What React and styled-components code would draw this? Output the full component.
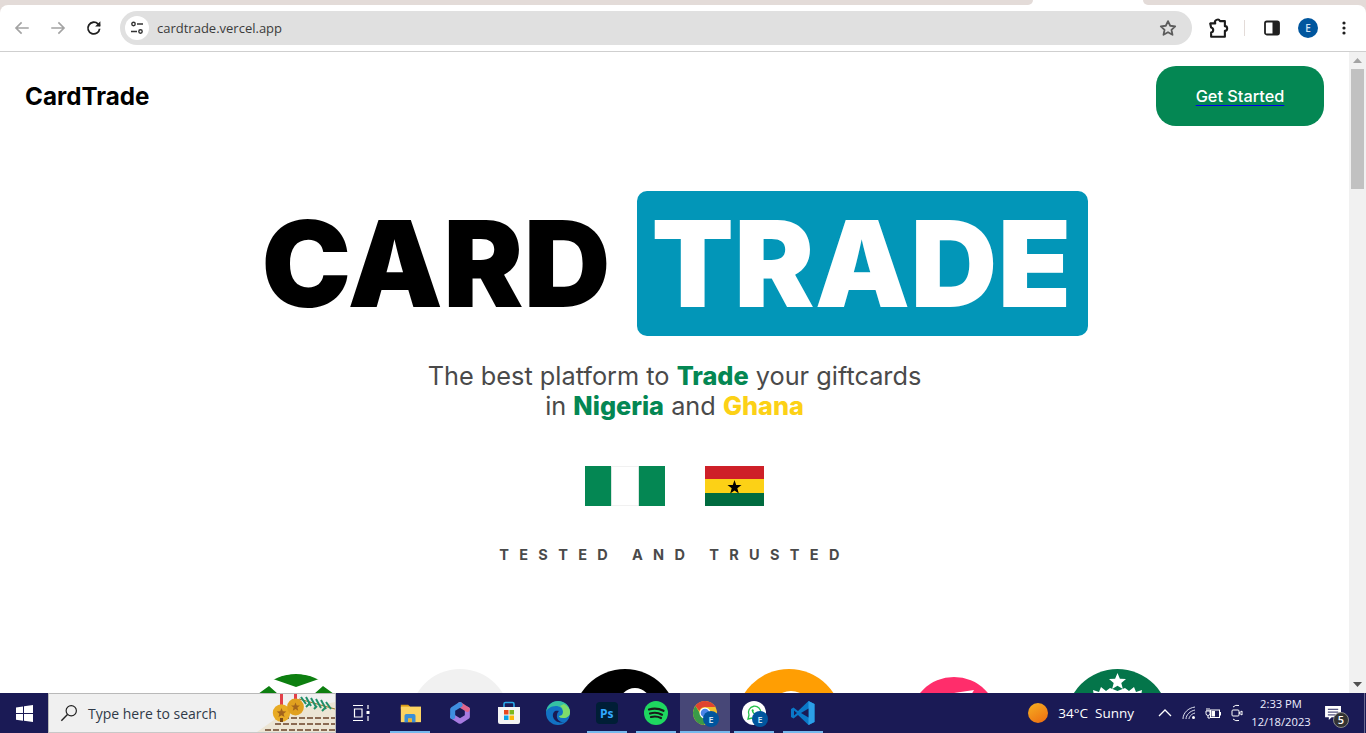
import styled, { createGlobalStyle } from 'styled-components';

const GlobalStyle = createGlobalStyle`
  html, body { margin: 0; padding: 0; height: 733px; overflow: hidden; background: #fff; }
  * { box-sizing: border-box; }
`;

const Screen = styled.div`
  width: 1366px;
  height: 733px;
  display: flex;
  flex-direction: column;
  overflow: hidden;
  font-family: Inter, "Liberation Sans", sans-serif;
`;

/* browser frame */
const TabStrip = styled.div`
  height: 5px;
  display: flex;
  background: #fff;
`;
const TabRest = styled.div`
  flex: ${(p) => (p.$side === 'left' ? '0 0 1033px' : '1')};
  background: #e3dbd8;
  border-radius: ${(p) => (p.$side === 'left' ? '0 0 7px 0' : '0 0 0 7px')};
`;
const TabGap = styled.div`
  width: 110px;
`;
const ToolbarBack = styled.div`
  background: linear-gradient(#e3dbd8 8px, #fff 8px);
`;
const Toolbar = styled.div`
  height: 47px;
  display: flex;
  align-items: center;
  background: #fff;
  border-radius: 8px 8px 0 0;
  border-bottom: 1px solid #cfcfcf;
  padding: 0 3px 1px 4px;
`;
const NavButton = styled.div`
  width: 36px;
  height: 34px;
  display: flex;
  align-items: center;
  justify-content: center;
  flex: none;
`;
const Omnibox = styled.div`
  flex: 1;
  height: 34px;
  margin: 0 8px 0 8px;
  border-radius: 17px;
  background: #e0e0e0;
  display: flex;
  align-items: center;
  padding: 0 15px 0 5px;
`;
const TuneChip = styled.div`
  width: 24px;
  height: 24px;
  border-radius: 50%;
  background: #fff;
  display: flex;
  align-items: center;
  justify-content: center;
`;
const Url = styled.div`
  flex: 1;
  margin-left: 8px;
  font: 400 13px "Open Sans", sans-serif;
  color: #3b3b3b;
`;
const ToolGroup = styled.div`
  display: flex;
  align-items: center;
  width: 163px;
  flex: none;
`;
const ToolSep = styled.div`
  width: 1px;
  height: 16px;
  background: #e3dbd8;
  margin: 0 9px 0 8px;
`;
const Avatar = styled.div`
  width: ${(p) => p.$size}px;
  height: ${(p) => p.$size}px;
  border-radius: 50%;
  background: #00569e;
  color: #cfe3f5;
  display: flex;
  align-items: center;
  justify-content: center;
  font: 600 ${(p) => p.$font}px "Open Sans", sans-serif;
  flex: none;
`;
const AvatarBadge = styled(Avatar)`
  position: absolute;
  right: -2px;
  bottom: -2px;
`;

/* page inside the browser */
const Viewport = styled.div`
  flex: 1;
  min-height: 0;
  display: flex;
`;
const Page = styled.div`
  flex: 1;
  min-width: 0;
  overflow: hidden;
  background: #fff;
`;
const Header = styled.header`
  display: flex;
  align-items: center;
  justify-content: space-between;
  padding: 14px 25px 0;
`;
const Logo = styled.div`
  font-size: 24.2px;
  font-weight: 700;
  color: #000;
`;
const GetStarted = styled.a`
  width: 168px;
  height: 60px;
  border-radius: 20px;
  background: #048753;
  color: #fff;
  display: flex;
  align-items: center;
  justify-content: center;
  font-size: 16.3px;
  font-weight: 500;
  text-decoration: underline;
  text-decoration-color: #0000ee;
  text-decoration-thickness: 1px;
  text-underline-offset: 3px;
`;
const Title = styled.h1`
  margin: 65px 0 0;
  display: flex;
  justify-content: center;
  align-items: center;
  gap: 26.5px;
  font-size: 120px;
  font-weight: 900;
  line-height: 145px;
  letter-spacing: 0.4px;
  color: #000;
`;
const TitleBox = styled.span`
  background: #0296b8;
  color: #fff;
  border-radius: 10px;
  padding: 0 16px 0 14px;
`;
const Subtitle = styled.p`
  margin: 25px 0 0;
  text-align: center;
  font-size: 25.3px;
  line-height: 30px;
  color: #4a4a4a;
`;
const Mark = styled.b`
  font-weight: 800;
  color: ${(p) => p.$color};
`;
const Flags = styled.div`
  margin-top: 45px;
  display: flex;
  justify-content: center;
  gap: 40px;
`;
const Tested = styled.div`
  margin-top: 39px;
  text-align: center;
  font-size: 14.5px;
  font-weight: 700;
  line-height: 20px;
  letter-spacing: 10.35px;
  color: #4a4a4a;
`;
const Brands = styled.div`
  margin-top: 104px;
  display: flex;
  gap: 64.4px;
  padding-left: 246px;
`;
const BrandSlot = styled.div`
  width: 100px;
  height: 100px;
  flex: none;
  display: flex;
  justify-content: center;
  align-items: flex-start;
`;

const Scrollbar = styled.div`
  width: 17px;
  flex: none;
  background: #f1f1f1;
  display: flex;
  flex-direction: column;
  align-items: center;
`;
const ScrollArrow = styled.div`
  height: 17px;
  width: 17px;
  display: flex;
  align-items: center;
  justify-content: center;
  margin-top: ${(p) => (p.$down ? 'auto' : '0')};
`;
const ScrollThumb = styled.div`
  width: 13px;
  height: 120px;
  background: #c1c1c1;
`;

/* windows taskbar */
const Taskbar = styled.div`
  height: 40px;
  flex: none;
  background: #1a1a55;
  display: flex;
  align-items: stretch;
  color: #fff;
  font-family: "Open Sans", sans-serif;
`;
const StartButton = styled.div`
  width: 48px;
  display: flex;
  align-items: center;
  justify-content: center;
`;
const SearchBox = styled.div`
  width: 288px;
  background: #f0f0f0;
  border: 1px solid #b9b9b9;
  border-bottom-color: #c8c8c8;
  display: flex;
  align-items: center;
  padding-left: 11px;
  position: relative;
  overflow: hidden;
  color: #2f3a48;
  font-size: 14px;
`;
const SearchText = styled.span`
  margin-left: 10px;
`;
const SearchArt = styled.svg`
  position: absolute;
  right: 0;
  top: 0;
`;
const TaskItem = styled.div`
  width: ${(p) => p.$w || 49.1}px;
  flex: none;
  position: relative;
  display: flex;
  align-items: center;
  justify-content: center;
  background: ${(p) => (p.$active ? 'rgba(255,255,255,.2)' : 'transparent')};
  &::after {
    content: '';
    display: ${(p) => (p.$open ? 'block' : 'none')};
    position: absolute;
    bottom: 0;
    left: ${(p) => (p.$active ? '0' : '4.6px')};
    right: ${(p) => (p.$active ? '0' : '4.6px')};
    height: 2px;
    background: #76b9ed;
  }
`;
const IconWrap = styled.div`
  position: relative;
  width: 24px;
  height: 24px;
  display: flex;
  align-items: center;
  justify-content: center;
`;
const Tray = styled.div`
  margin-left: auto;
  display: flex;
  align-items: center;
  font-size: 13.5px;
`;
const Weather = styled.div`
  display: flex;
  align-items: center;
  gap: 10px;
  margin-right: 19px;
`;
const Sun = styled.div`
  width: 20px;
  height: 20px;
  border-radius: 50%;
  background: linear-gradient(150deg, #f5b122, #ee6a10);
`;
const WeatherText = styled.span`
  white-space: pre;
`;
const TrayIcon = styled.div`
  width: 24px;
  display: flex;
  justify-content: center;
`;
const Clock = styled.div`
  width: 60px;
  margin-left: 2px;
  text-align: center;
  font-size: 11.2px;
  line-height: 18px;
  color: #eef;
  white-space: nowrap;
`;
const Notify = styled.div`
  position: relative;
  align-self: stretch;
  width: 44px;
  display: flex;
  align-items: center;
  justify-content: center;
`;
const NotifyBadge = styled.div`
  position: absolute;
  left: 22px;
  top: 19px;
  width: 16px;
  height: 16px;
  border-radius: 50%;
  background: #333;
  border: 1px solid #888;
  font-size: 11px;
  font-weight: 600;
  line-height: 14px;
  text-align: center;
`;
const DesktopEdge = styled.div`
  width: 2px;
  align-self: stretch;
  border-left: 1px solid #6a6a90;
  margin: 0 0 0 9px;
`;

const Arrow = ({ flip, color }) => (
  <svg width="18" height="18" viewBox="0 0 24 24" fill="none" stroke={color} strokeWidth="2.2" style={flip ? { transform: 'scaleX(-1)' } : undefined}>
    <path d="M21 12H4M11.5 4.5 4 12l7.5 7.5" />
  </svg>
);

const Reload = () => (
  <svg width="18" height="18" viewBox="0 0 24 24" fill="none" stroke="#1f1f1f" strokeWidth="2.4">
    <path d="M19.5 13a7.8 7.8 0 1 1-2.2-6.4L20 9" />
    <path d="M20.5 3v7h-7" fill="#1f1f1f" stroke="none" />
  </svg>
);

const Tune = () => (
  <svg width="14" height="14" viewBox="0 0 14 14" fill="none" stroke="#333" strokeWidth="1.4">
    <circle cx="3.5" cy="3" r="1.7" />
    <path d="M7 3h6M1 10.500h6" />
    <circle cx="10.500" cy="10.500" r="1.700" />
  </svg>
);

const Star = () => (
  <svg width="18" height="18" viewBox="0 0 24 24" fill="none" stroke="#5c5c5c" strokeWidth="2.400" strokeLinejoin="round">
    <path d="m12 2.800 2.900 6.200 6.700.8-5 4.600 1.400 6.700L12 17.700l-6 3.400 1.400-6.700-5-4.600 6.700-.8z" />
  </svg>
);

const Puzzle = () => (
  <svg width="22" height="22" viewBox="0 0 24 24" fill="none" stroke="#1b1b1b" strokeWidth="2.300" strokeLinejoin="round">
    <path d="M3.500 7H9a2.700 2.700 0 0 1 5.200-2.500L19.500 4.500V10a2.500 2.500 0 0 1 0 5V21.500H4.500V17a2.800 2.800 0 0 0 0-5.500z" />
  </svg>
);

const SidePanel = () => (
  <svg width="16" height="16" viewBox="0 0 16 16">
    <rect x="1" y="1.500" width="14" height="13" rx="1.800" fill="#fff" stroke="#1f1f1f" strokeWidth="1.800" />
    <rect x="8.500" y="1.500" width="6.500" height="13" fill="#1f1f1f" />
  </svg>
);

const Dots = () => (
  <svg width="4" height="14" viewBox="0 0 4 14" fill="#1f1f1f">
    <circle cx="2" cy="2" r="1.600" />
    <circle cx="2" cy="7" r="1.600" />
    <circle cx="2" cy="12" r="1.600" />
  </svg>
);

const NigeriaFlag = () => (
  <svg width="80" height="40" viewBox="0 0 80 40">
    <rect width="80" height="40" fill="#048753" />
    <rect x="26.500" width="27" height="40" fill="#fff" />
    <rect x="26.500" y=".5" width="27" height="39" fill="none" stroke="#eee" strokeWidth=".8" />
  </svg>
);

const GhanaFlag = () => (
  <svg width="59" height="40" viewBox="0 0 59 40">
    <rect width="59" height="13" fill="#ce2028" />
    <rect y="13" width="59" height="14" fill="#fcd116" />
    <rect y="27" width="59" height="13" fill="#006b3f" />
    <path d="m29.500 14 1.700 5 5.300.1-4.200 3.200 1.500 5.100-4.300-3-4.300 3 1.500-5.100-4.200-3.200 5.300-.1z" fill="#000" />
  </svg>
);

const CoatLogo = () => (
  <svg width="96" height="60" viewBox="0 0 96 60">
    <path d="M25 5C38-2 58-2 71 5L48 13Z" fill="#0d7f10" />
    <path d="M10 20 21 12 30 20zM66 20 75 12 86 20z" fill="#0d7f10" />
  </svg>
);

const Disc = styled.div`
  width: ${(p) => p.$size}px;
  height: ${(p) => p.$size}px;
  border-radius: 50%;
  background: ${(p) => p.$color};
  flex: none;
  position: relative;
  overflow: hidden;
  margin-top: ${(p) => p.$top || 0}px;
`;
const DiscHole = styled.div`
  position: absolute;
  left: calc(50% + ${(p) => p.$x || 0}px);
  transform: translateX(-50%);
  top: ${(p) => p.$top}px;
  width: ${(p) => p.$w}px;
  height: ${(p) => p.$w}px;
  border-radius: 50%;
  background: #fff;
`;
const DiscArt = styled.svg`
  position: absolute;
  left: 0;
  top: 0;
`;

const StarbucksArt = () => (
  <DiscArt width="103" height="103" viewBox="0 0 103 103">
    <path d="m51.500 4 2.400 5.800 6.100.3-4.700 4 1.600 6-5.400-3.300-5.400 3.300 1.600-6-4.700-4 6.100-.3z" fill="#fff" />
    <path d="M28 27 27 21l6 2 2-5 5 4 4-3 7.500 3 7.500-3 4 3 5-4 2 5 6-2-1 6z" fill="#fff" />
  </DiscArt>
);

const PinkArt = () => (
  <DiscArt width="88" height="88" viewBox="0 0 88 88">
    <path d="M44 16 64 13 60 20H44z" fill="#fff" />
  </DiscArt>
);

const WinLogo = () => (
  <svg width="17" height="17" viewBox="0 0 17 17" fill="#fff">
    <path d="M0 2.400 7 1.400v6.700H0zM8 1.300 17 0v8.100H8zM0 9h7v6.700l-7-1zM8 9h9v8l-9-1.300z" />
  </svg>
);

const SearchGlass = () => (
  <svg width="18" height="18" viewBox="0 0 20 20" fill="none" stroke="#222" strokeWidth="1.300">
    <circle cx="12.500" cy="7.500" r="5.700" />
    <path d="M8.300 11.700 1.500 18.500" strokeWidth="1.600" />
  </svg>
);

const ChristmasArt = () => (
  <SearchArt width="78" height="38" viewBox="0 0 78 38">
    <path d="M78 8 L78 38 H0 L28 18 Z" fill="#ece5d4" />
    <g stroke="#8a6a52" strokeWidth="2" strokeDasharray="6 2">
      <path d="M26 24H78M18 30H78M8 36H78" />
    </g>
    <path d="M42 5 78 15" stroke="#9a7a2a" strokeWidth="1.200" />
    <path d="M44 3l5 7M49 3l5 9M54 4l5 9M59 5l5 9M64 6l5 9M69 8l5 7M52 10l-3 3M60 12l-3 3M68 14l-3 3" stroke="#1f8f6a" strokeWidth="2" />
    <rect x="23" y="0" width="3" height="11" fill="#e2404a" />
    <rect x="37" y="0" width="3" height="6" fill="#e2404a" />
    <circle cx="24.500" cy="19" r="8.700" fill="#e8ab25" />
    <circle cx="38.500" cy="13" r="8.400" fill="#e0a01f" />
    <path d="m24.500 14 1.300 3.300 3.500.2-2.700 2.200.9 3.400-3-1.900-3 1.900.9-3.400-2.700-2.200 3.500-.2z" fill="#a3641c" />
    <path d="m38.500 8.500 1.200 2.900 3.200.2-2.500 2 .8 3.100-2.700-1.700-2.700 1.700.8-3.100-2.500-2 3.200-.2z" fill="#a3641c" />
    <rect x="23" y="24" width="3" height="4" fill="#7a4a17" />
  </SearchArt>
);

const TaskView = () => (
  <svg width="18" height="18" viewBox="0 0 18 18" fill="none" stroke="#fff" strokeWidth="1.200">
    <path d="M1 1.500h10M1 16.500h10M2.500 5h7.500v8H2.500zM16 1v4M16 12v5" />
    <rect x="14.500" y="7" width="3" height="3" fill="#fff" stroke="none" />
  </svg>
);

const Folder = () => (
  <svg width="22" height="22" viewBox="0 0 24 24">
    <path d="M2 3h8l2 2v3H2z" fill="#d99b16" />
    <rect x="2" y="5" width="22" height="17" fill="#fcd462" />
    <path d="M6 22v-7a2 2 0 0 1 2-2h8a2 2 0 0 1 2 2v7h-4v-4h-4v4z" fill="#3b8fd6" />
    <rect x="10" y="18" width="4" height="4" fill="#f0b428" />
  </svg>
);

const Copilot = () => (
  <svg width="22" height="24" viewBox="0 0 24 24" fill="none" strokeWidth="5.500" strokeLinejoin="round" strokeLinecap="round">
    <path d="M20 8v8l-8 5-8-5" stroke="#a77be0" />
    <path d="M12 3l8 5" stroke="#e0668c" />
    <path d="M12 3 4 8v8" stroke="#3f8fe0" />
  </svg>
);

const Store = () => (
  <svg width="24" height="24" viewBox="0 0 24 24">
    <path d="M7 6V3a1.500 1.500 0 0 1 1.500-1.500h7A1.500 1.500 0 0 1 17 3v3" fill="none" stroke="#29a9e8" strokeWidth="1.600" />
    <path d="M1 6h22v15a2 2 0 0 1-2 2H3a2 2 0 0 1-2-2z" fill="#f4f4f4" />
    <rect x="7" y="9" width="4.500" height="4.500" fill="#e8481f" />
    <rect x="12.500" y="9" width="4.500" height="4.500" fill="#7cb820" />
    <rect x="7" y="14.500" width="4.500" height="4.500" fill="#08a1e8" />
    <rect x="12.500" y="14.500" width="4.500" height="4.500" fill="#fbb80a" />
  </svg>
);

const Edge = () => (
  <svg width="24" height="24" viewBox="0 0 24 24">
    <circle cx="12" cy="12" r="12" fill="#1272c4" />
    <path d="M0 11C1 4 6 0 12 0c7 0 12 5 12 11 0 4-3 6-7 6-2 0-4-1-4-2 2 0 4-1 4-4 0-4-4-6-7-6-5 0-9 3-10 6z" fill="#35c1a3" />
    <path d="M18 3c4 2 6 5 6 8 0 4-3 6-7 6-2 0-4-1-4-2 2 0 4-1 4-4 0-3-1-5-3-6z" fill="#7fdc6b" />
    <path d="M9 10c-3 2-3 7 1 10 2 1.500 5 2 8 1-4 1-8-3-7-7 0-2 1-3 2-4-1-.5-3-.5-4 0z" fill="#1a1a55" />
  </svg>
);

const PsIcon = styled.div`
  width: 22px;
  height: 22px;
  border-radius: 4px;
  background: #001e36;
  color: #31a8ff;
  font: 700 12px "Open Sans", sans-serif;
  display: flex;
  align-items: center;
  justify-content: center;
`;

const Spotify = () => (
  <svg width="24" height="24" viewBox="0 0 24 24">
    <circle cx="12" cy="12" r="12" fill="#1ed760" />
    <path d="M5 8.500c5-1.500 10-1 14.500 1.300M6 12.500c4-1.200 8.500-.8 12 1.200M7 16c3.500-.9 7-.6 10 1" fill="none" stroke="#1a1a1a" strokeWidth="2.200" strokeLinecap="round" />
  </svg>
);

const Chrome = () => (
  <svg width="24" height="24" viewBox="0 0 24 24">
    <circle cx="12" cy="12" r="12" fill="#f2c02c" />
    <path d="M12 0a12 12 0 0 1 10.400 6H12a6 6 0 0 0-5.700 4L2.400 5A12 12 0 0 1 12 0z" fill="#e0442f" />
    <path d="M2.400 5 8 14l3 10A12 12 0 0 1 2.400 5z" fill="#3a9a48" />
    <path d="M8 14c2 3 6 3 8 1l-5 9a12 12 0 0 1-3-10z" fill="#3a9a48" />
    <circle cx="12" cy="12" r="5.500" fill="#fff" />
    <circle cx="12" cy="12" r="4.300" fill="#4a86e8" />
  </svg>
);

const Whatsapp = () => (
  <svg width="24" height="24" viewBox="0 0 24 24">
    <circle cx="12" cy="12" r="12" fill="#fff" />
    <path d="M6 18l1-4a6.200 6.200 0 1 1 3 3z" fill="none" stroke="#25c04a" strokeWidth="1.300" />
    <path d="M9.500 9c.5 3 2 4.500 5 5l1-1.500-2-1-.7.700-1.500-1.500.7-.7-1-2z" fill="#25c04a" />
  </svg>
);

const VSCode = () => (
  <svg width="24" height="24" viewBox="0 0 24 24">
    <path d="M17.500 0 23.500 3v18l-6 3L7 14l-4.500 3.500L0 16v-8l2.500-1.500L7 10z" fill="#0a78c8" />
    <path d="M17.500 0 23.500 3v18l-6 3z" fill="#2c9fe8" />
    <path d="M17.500 7.500 10 12l7.500 4.500z" fill="#1a1a55" />
    <path d="M3 9.500 6 12l-3 2.500z" fill="#1a1a55" />
  </svg>
);

const Chevron = () => (
  <svg width="14" height="10" viewBox="0 0 14 10" fill="none" stroke="#fff" strokeWidth="1.300">
    <path d="M1 8l6-6 6 6" />
  </svg>
);

const Wifi = () => (
  <svg width="14" height="14" viewBox="0 0 14 14" fill="none" stroke="#dfe2f0" strokeWidth="1">
    <path d="M1 13C1 7 6 2 13 1M4 13c0-4 4-8 9-9M7 13c0-2 2-5 6-6" />
    <circle cx="11.500" cy="11.500" r="1.500" fill="#fff" stroke="none" />
  </svg>
);

const Battery = () => (
  <svg width="16" height="11" viewBox="0 0 16 11" fill="none" stroke="#fff" strokeWidth="1">
    <path d="M2 0v3M4 0v3M1 3h4v2.500a2 2 0 0 1-4 0zM3 8v2H5" />
    <rect x="5.500" y="2" width="9" height="7.500" />
    <rect x="6.500" y="3" width="3.500" height="5.500" fill="#fff" stroke="none" />
    <rect x="14.500" y="4" width="1.500" height="3.500" fill="#fff" stroke="none" />
  </svg>
);

const Meet = () => (
  <svg width="12" height="18" viewBox="0 0 12 18" fill="none" stroke="#fff" strokeWidth="1">
    <path d="M2 3a6 6 0 0 1 6-1.500M2 15a6 6 0 0 0 6 1.500" />
    <rect x="1" y="6" width="7" height="6" rx="1" />
    <path d="M8 9l3-2v4z" />
  </svg>
);

const Bubble = () => (
  <svg width="17" height="15" viewBox="0 0 18 16">
    <path d="M0 0h17v12H7l-3 3v-3H0z" fill="#fff" />
    <path d="M3 3.500h11M3 6.500h11M3 9.500h8" stroke="#1a1a55" strokeWidth="1" />
  </svg>
);

const ScrollTri = ({ down }) => (
  <svg width="9" height="5" viewBox="0 0 9 5" fill={down ? '#505050' : '#a3a3a3'}>
    <path d={down ? 'M0 0h9L4.500 5z' : 'M0 5h9L4.500 0z'} />
  </svg>
);

const taskApps = [
  { key: 'taskview', icon: <TaskView />, w: 49 },
  { key: 'folder', icon: <Folder />, open: true, w: 50 },
  { key: 'copilot', icon: <Copilot /> },
  { key: 'store', icon: <Store /> },
  { key: 'edge', icon: <Edge /> },
  { key: 'ps', icon: <PsIcon>Ps</PsIcon>, open: true },
  { key: 'spotify', icon: <Spotify />, open: true },
  { key: 'chrome', icon: <Chrome />, open: true, active: true, badge: true },
  { key: 'whatsapp', icon: <Whatsapp />, open: true, badge: true },
  { key: 'vscode', icon: <VSCode />, open: true },
];

function App() {
  return (
    <Screen>
      <GlobalStyle />
      <TabStrip>
        <TabRest $side="left" />
        <TabGap />
        <TabRest $side="right" />
      </TabStrip>
      <ToolbarBack>
        <Toolbar>
          <NavButton><Arrow color="#a3a3a3" /></NavButton>
          <NavButton><Arrow flip color="#a3a3a3" /></NavButton>
          <NavButton><Reload /></NavButton>
          <Omnibox>
            <TuneChip><Tune /></TuneChip>
            <Url>cardtrade.vercel.app</Url>
            <Star />
          </Omnibox>
          <ToolGroup>
            <NavButton><Puzzle /></NavButton>
            <ToolSep />
            <NavButton><SidePanel /></NavButton>
            <NavButton><Avatar $size={20} $font={10}>E</Avatar></NavButton>
            <NavButton><Dots /></NavButton>
          </ToolGroup>
        </Toolbar>
      </ToolbarBack>

      <Viewport>
        <Page>
          <Header>
            <Logo>CardTrade</Logo>
            <GetStarted>Get Started</GetStarted>
          </Header>
          <Title>
            <span>CARD</span>
            <TitleBox>TRADE</TitleBox>
          </Title>
          <Subtitle>
            The best platform to <Mark $color="#048753">Trade</Mark> your giftcards
            <br />
            in <Mark $color="#048753">Nigeria</Mark> and <Mark $color="#fcd116">Ghana</Mark>
          </Subtitle>
          <Flags>
            <NigeriaFlag />
            <GhanaFlag />
          </Flags>
          <Tested>TESTED AND TRUSTED</Tested>
          <Brands>
            <BrandSlot><Disc $size={96} $color="#fff" $top={5}><CoatLogo /></Disc></BrandSlot>
            <BrandSlot><Disc $size={100} $color="#f1f1f1" /></BrandSlot>
            <BrandSlot><Disc $size={104} $color="#000"><DiscHole $top={19} $w={32} $x={10} /></Disc></BrandSlot>
            <BrandSlot><Disc $size={106} $color="#ff9e03"><DiscHole $top={22} $w={44} $x={2} /></Disc></BrandSlot>
            <BrandSlot><Disc $size={88} $color="#ff2d6b" $top={8}><PinkArt /></Disc></BrandSlot>
            <BrandSlot><Disc $size={103} $color="#04754a"><StarbucksArt /></Disc></BrandSlot>
          </Brands>
        </Page>
        <Scrollbar>
          <ScrollArrow><ScrollTri /></ScrollArrow>
          <ScrollThumb />
          <ScrollArrow $down><ScrollTri down /></ScrollArrow>
        </Scrollbar>
      </Viewport>

      <Taskbar>
        <StartButton><WinLogo /></StartButton>
        <SearchBox>
          <SearchGlass />
          <SearchText>Type here to search</SearchText>
          <ChristmasArt />
        </SearchBox>
        {taskApps.map((app) => (
          <TaskItem key={app.key} $open={app.open} $active={app.active} $w={app.w}>
            <IconWrap>
              {app.icon}
              {app.badge && <AvatarBadge $size={16} $font={9}>E</AvatarBadge>}
            </IconWrap>
          </TaskItem>
        ))}
        <Tray>
          <Weather>
            <Sun />
            <WeatherText>34°C  Sunny</WeatherText>
          </Weather>
          <TrayIcon><Chevron /></TrayIcon>
          <TrayIcon><Wifi /></TrayIcon>
          <TrayIcon><Battery /></TrayIcon>
          <TrayIcon><Meet /></TrayIcon>
          <Clock>2:33 PM<br />12/18/2023</Clock>
          <Notify>
            <Bubble />
            <NotifyBadge>5</NotifyBadge>
          </Notify>
          <DesktopEdge />
        </Tray>
      </Taskbar>
    </Screen>
  );
}

export default App;
